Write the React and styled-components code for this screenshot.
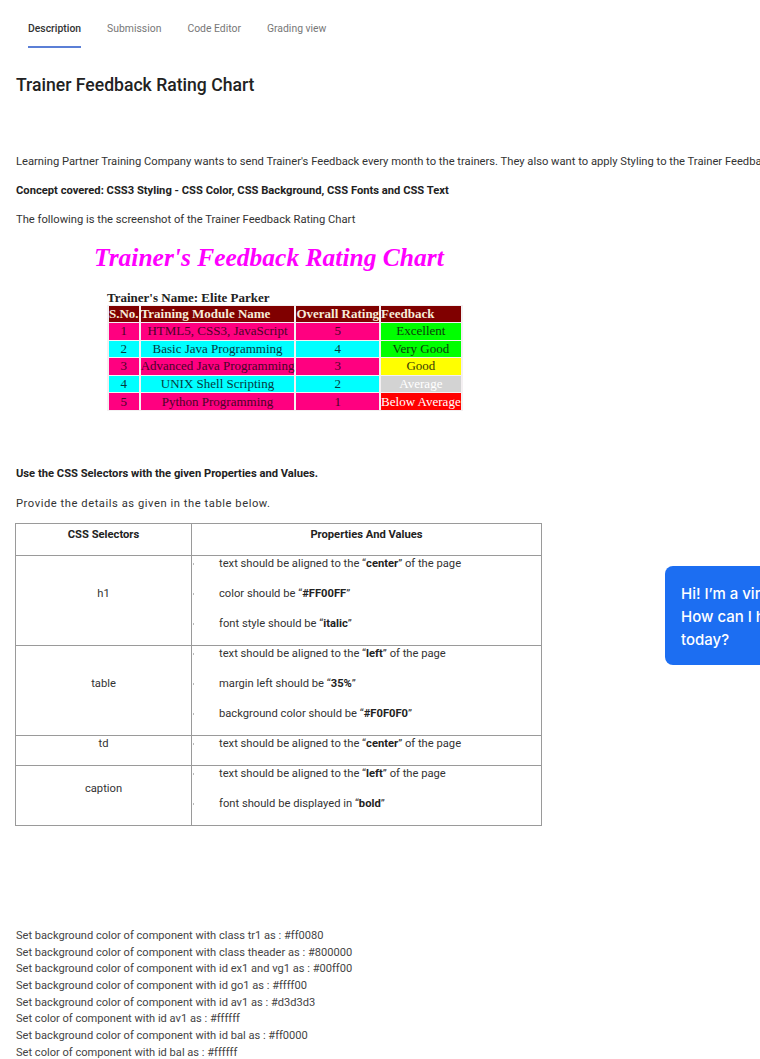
import React from 'react';
import styled, { createGlobalStyle } from 'styled-components';

const GlobalStyle = createGlobalStyle`
  html, body {
    margin: 0;
    padding: 0;
    background: #fff;
  }
  body {
    font-family: Roboto, 'Liberation Sans', sans-serif;
    color: #333;
  }
`;

const Page = styled.div`
  position: relative;
  width: 760px;
  height: 1059px;
  overflow: hidden;
`;

const TabBar = styled.div`
  display: flex;
  gap: 26px;
  padding: 22px 0 0 28px;
`;

const Tab = styled.div`
  font-size: 10.4px;
  line-height: 13px;
  padding-bottom: 11px;
  color: ${(p) => (p.active ? '#333' : '#777')};
  font-weight: ${(p) => (p.active ? 500 : 400)};
  border-bottom: 2px solid ${(p) => (p.active ? '#5b7fd6' : 'transparent')};
`;

const Content = styled.div`
  padding-left: 16px;
`;

const Title = styled.h2`
  margin: 26px 0 0;
  font-size: 17.6px;
  line-height: 22px;
  font-weight: 500;
  color: #222;
`;

const Para = styled.p`
  margin: ${(p) => p.top || 14}px 0 0;
  font-size: 11.2px;
  line-height: 15px;
  white-space: nowrap;
  letter-spacing: ${(p) => p.spacing || 0}px;
  font-weight: ${(p) => (p.bold ? 700 : 400)};
  color: ${(p) => (p.bold ? '#222' : '#333')};
`;

// screenshot of the rendered chart
const Chart = styled.div`
  margin: 16px 0 0 78px;
  font-family: 'Liberation Serif', 'Times New Roman', serif;
`;

const ChartTitle = styled.div`
  font-size: 25.5px;
  line-height: 30px;
  font-weight: bold;
  font-style: italic;
  color: #ff00ff;
`;

const ChartTable = styled.table`
  margin: 18px 0 0 13px;
  border-collapse: separate;
  border-spacing: 2px 1px;
  background: #f4f0f2;
  font-size: 13px;
  caption {
    text-align: left;
    font-weight: bold;
    color: #222;
    line-height: 14px;
    padding-left: 0;
  }
`;

const HeadCell = styled.th`
  background: #800000;
  color: #f6ecd8;
  font-weight: bold;
  padding: 0;
  line-height: 16px;
  text-align: left;
  white-space: nowrap;
`;

const Cell = styled.td`
  background: ${(p) => p.bg};
  color: ${(p) => p.fg};
  padding: 0;
  height: 16.6px;
  line-height: 16px;
  text-align: center;
  white-space: nowrap;
`;

const SelectorTable = styled.table`
  margin: 12px 0 0 -1px;
  width: 527px;
  border-collapse: collapse;
  font-size: 11.2px;
  color: #333;
  border: 1px solid #9a9a9a;
`;

const Th = styled.th`
  border: 1px solid #9a9a9a;
  height: 27px;
  padding: 4px 0 0;
  vertical-align: top;
  font-weight: 700;
  color: #222;
  line-height: 13px;
`;

const SelCell = styled.td`
  border: 1px solid #9a9a9a;
  width: 175px;
  text-align: center;
  vertical-align: middle;
  padding: 0 0 14px;
`;

const PropCell = styled.td`
  border: 1px solid #9a9a9a;
  vertical-align: top;
  padding: 0;
`;

const PropList = styled.ul`
  list-style: none;
  margin: 0;
  padding: 0;
`;

const PropItem = styled.li`
  display: flex;
  align-items: center;
  height: 16px;
  margin-bottom: 14px;
  &:last-child {
    margin-bottom: 13px;
  }
  &::before {
    content: '';
    width: 1px;
    height: 2px;
    background: #bbb;
    margin: 0 25px 0 1px;
  }
  b {
    font-weight: 700;
    color: #222;
  }
`;

const Notes = styled.div`
  margin-top: 102px;
  font-size: 11.1px;
  line-height: 16.7px;
  color: #444;
`;

const ChatBubble = styled.div`
  position: absolute;
  left: 665px;
  top: 566px;
  width: 200px;
  height: 99px;
  box-sizing: border-box;
  padding: 16px 16px;
  border-radius: 8px;
  background: #1c6ef2;
  color: #fff;
  font-family: Inter, 'Open Sans', sans-serif;
  font-size: 15px;
  line-height: 23px;
  font-weight: 500;
  white-space: nowrap;
`;

const rows = [
  ['1', 'HTML5, CSS3, JavaScript', '5', 'Excellent', '#ff0080', '#4a0428', '#00ff00', '#0c3a0c'],
  ['2', 'Basic Java Programming', '4', 'Very Good', '#00ffff', '#063a3f', '#00ff00', '#0c3a0c'],
  ['3', 'Advanced Java Programming', '3', 'Good', '#ff0080', '#4a0428', '#ffff00', '#3a3a06'],
  ['4', 'UNIX Shell Scripting', '2', 'Average', '#00ffff', '#063a3f', '#d3d3d3', '#ffffff'],
  ['5', 'Python Programming', '1', 'Below Average', '#ff0080', '#4a0428', '#ff0000', '#ffffff'],
];

const selectors = [
  {
    name: 'h1',
    props: [
      <>text should be aligned to the “<b>center</b>” of the page</>,
      <>color should be “<b>#FF00FF</b>”</>,
      <>font style should be “<b>italic</b>”</>,
    ],
  },
  {
    name: 'table',
    props: [
      <>text should be aligned to the “<b>left</b>” of the page</>,
      <>margin left should be “<b>35%</b>”</>,
      <>background color should be “<b>#F0F0F0</b>”</>,
    ],
  },
  {
    name: 'td',
    props: [<>text should be aligned to the “<b>center</b>” of the page</>],
  },
  {
    name: 'caption',
    props: [
      <>text should be aligned to the “<b>left</b>” of the page</>,
      <>font should be displayed in “<b>bold</b>”</>,
    ],
  },
];

const notes = [
  'Set background color of component with class tr1 as : #ff0080',
  'Set background color of component with class theader as : #800000',
  'Set background color of component with id ex1 and vg1 as : #00ff00',
  'Set background color of component with id go1 as : #ffff00',
  'Set background color of component with id av1 as : #d3d3d3',
  'Set color of component with id av1 as : #ffffff',
  'Set background color of component with id bal as : #ff0000',
  'Set color of component with id bal as : #ffffff',
];

const App = () => {
  return (
    <Page>
      <GlobalStyle />
      <TabBar>
        <Tab active>Description</Tab>
        <Tab>Submission</Tab>
        <Tab>Code Editor</Tab>
        <Tab>Grading view</Tab>
      </TabBar>
      <Content>
        <Title>Trainer Feedback Rating Chart</Title>
        <Para top={58}>
          Learning Partner Training Company wants to send Trainer's Feedback every month to the
          trainers. They also want to apply Styling to the Trainer Feedback Rating Chart.
        </Para>
        <Para bold>
          Concept covered: CSS3 Styling - CSS Color, CSS Background, CSS Fonts and CSS Text
        </Para>
        <Para>The following is the screenshot of the Trainer Feedback Rating Chart</Para>

        <Chart>
          <ChartTitle>Trainer's Feedback Rating Chart</ChartTitle>
          <ChartTable>
            <caption>Trainer's Name: Elite Parker</caption>
            <thead>
              <tr>
                <HeadCell>S.No.</HeadCell>
                <HeadCell>Training Module Name</HeadCell>
                <HeadCell>Overall Rating</HeadCell>
                <HeadCell>Feedback</HeadCell>
              </tr>
            </thead>
            <tbody>
              {rows.map((r) => (
                <tr key={r[0]}>
                  <Cell bg={r[4]} fg={r[5]}>{r[0]}</Cell>
                  <Cell bg={r[4]} fg={r[5]}>{r[1]}</Cell>
                  <Cell bg={r[4]} fg={r[5]}>{r[2]}</Cell>
                  <Cell bg={r[6]} fg={r[7]}>{r[3]}</Cell>
                </tr>
              ))}
            </tbody>
          </ChartTable>
        </Chart>

        <Para bold top={55}>Use the CSS Selectors with the given Properties and Values.</Para>
        <Para top={15} spacing={0.55}>Provide the details as given in the table below.</Para>

        <SelectorTable>
          <thead>
            <tr>
              <Th>CSS Selectors</Th>
              <Th>Properties And Values</Th>
            </tr>
          </thead>
          <tbody>
            {selectors.map((s) => (
              <tr key={s.name}>
                <SelCell>{s.name}</SelCell>
                <PropCell>
                  <PropList>
                    {s.props.map((p, i) => (
                      <PropItem key={i}>
                        <span>{p}</span>
                      </PropItem>
                    ))}
                  </PropList>
                </PropCell>
              </tr>
            ))}
          </tbody>
        </SelectorTable>

        <Notes>
          {notes.map((n) => (
            <div key={n}>{n}</div>
          ))}
        </Notes>
      </Content>

      <ChatBubble>
        Hi! I’m a virtual assistant.
        <br />
        How can I help you
        <br />
        today?
      </ChatBubble>
    </Page>
  );
};

export default App;
